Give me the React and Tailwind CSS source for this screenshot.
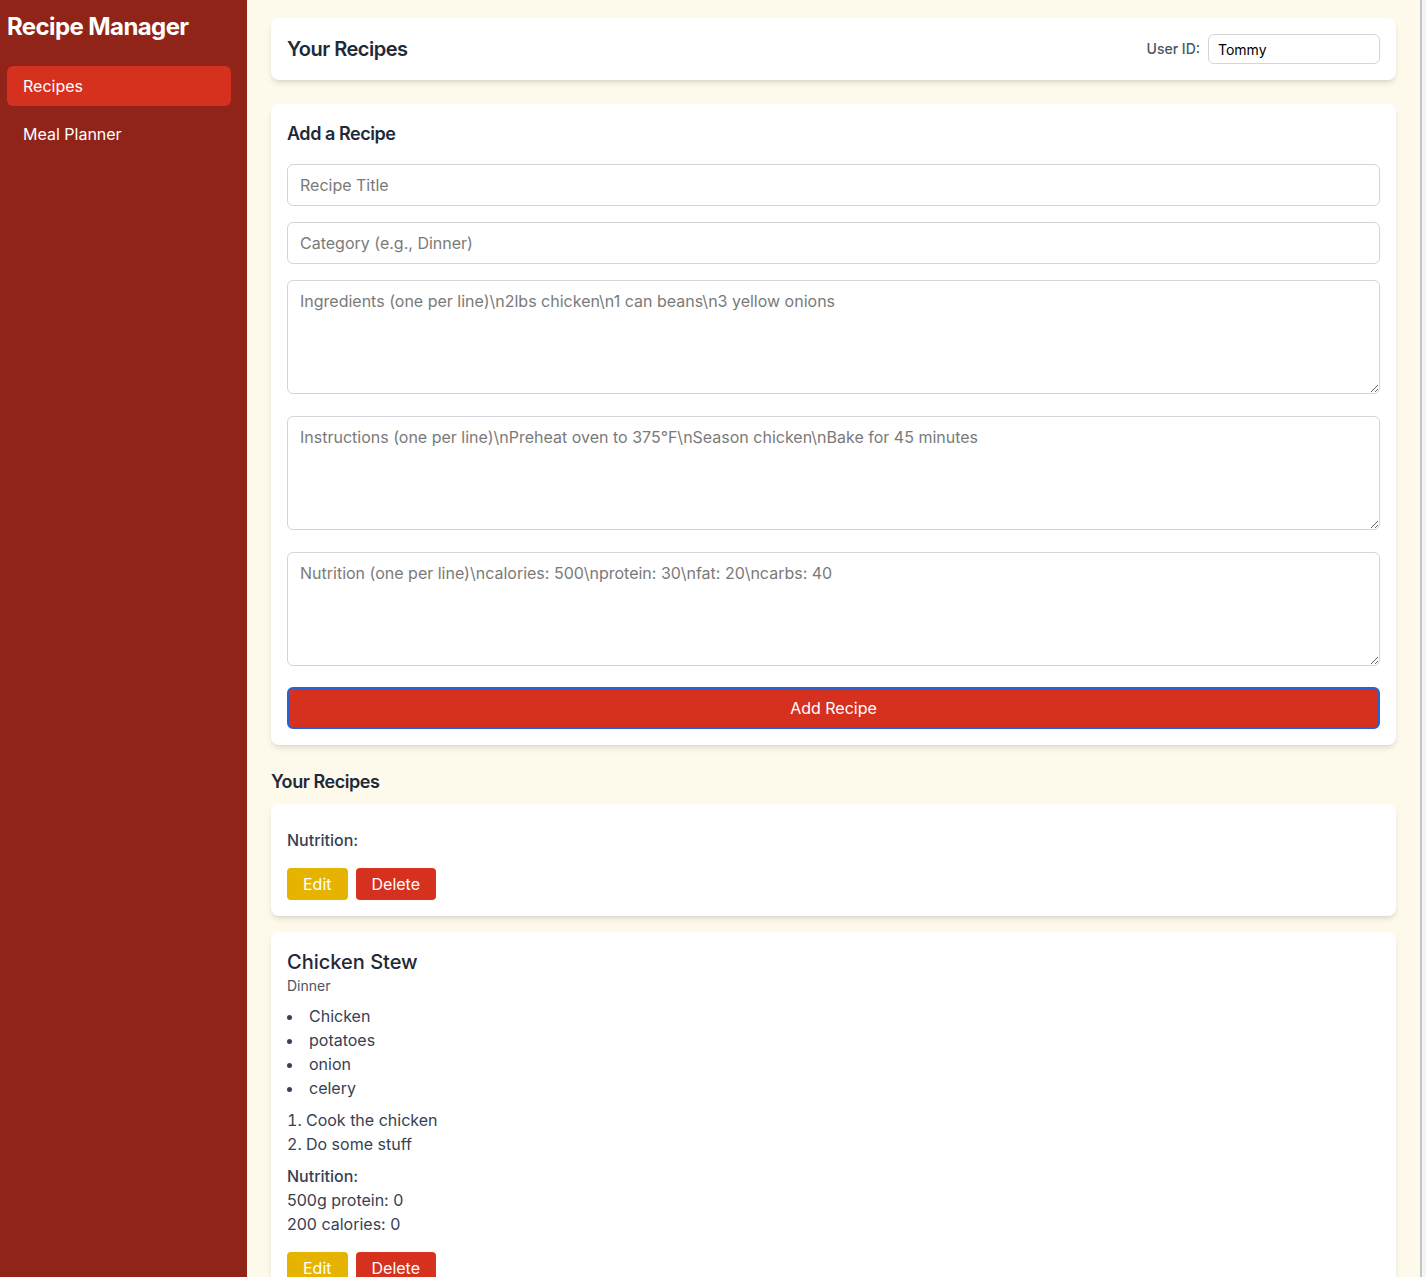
import React from 'react';

const recipes = [
  { id: 1, title: '', category: '', ingredients: [], instructions: [], nutrition: [] },
  {
    id: 2,
    title: 'Chicken Stew',
    category: 'Dinner',
    ingredients: ['Chicken', 'potatoes', 'onion', 'celery'],
    instructions: ['Cook the chicken', 'Do some stuff'],
    nutrition: ['500g protein: 0', '200 calories: 0'],
  },
];

function RecipeCard({ recipe }) {
  return (
    <div className="bg-white rounded-lg shadow-md p-4 mb-4">
      {recipe.title && (
        <>
          <h3 className="text-xl font-medium text-gray-800 leading-7">{recipe.title}</h3>
          <p className="text-sm text-gray-600 leading-5">{recipe.category}</p>
          <ul className="list-disc list-inside mt-2 text-gray-700">
            {recipe.ingredients.map((ing, i) => (
              <li key={i}>{ing}</li>
            ))}
          </ul>
          <ol className="list-decimal list-inside mt-2 text-gray-700">
            {recipe.instructions.map((step, i) => (
              <li key={i}>{step}</li>
            ))}
          </ol>
        </>
      )}
      <div className="mt-2 text-gray-700">
        <p className="font-medium">Nutrition:</p>
        {recipe.nutrition.map((n, i) => (
          <p key={i}>{n}</p>
        ))}
      </div>
      <div className="flex gap-2 mt-4">
        <button className="bg-[#e6b400] text-white px-4 h-8 rounded">Edit</button>
        <button className="bg-[#d6301f] text-white px-4 h-8 rounded">Delete</button>
      </div>
    </div>
  );
}

export default function App() {
  const inputCls =
    'block w-full border border-gray-300 rounded-md px-3 py-2 text-base text-gray-800 placeholder:text-[#7a7a7a] bg-white';

  return (
    <div className="flex min-h-screen font-['Inter',sans-serif] bg-[#fefaeb]">
      {/* Sidebar */}
      <aside className="w-[247px] shrink-0 bg-[#912419] text-white px-[7px] pt-[11px]">
        <h1 className="text-2xl font-bold leading-8 mb-[23px] tracking-tight">Recipe Manager</h1>
        <nav className="w-[224px] flex flex-col gap-2">
          <a className="block bg-[#d6301f] rounded-md px-4 py-2">Recipes</a>
          <a className="block rounded-md px-4 py-2">Meal Planner</a>
        </nav>
      </aside>

      {/* Main */}
      <main className="flex-1 px-6 pt-[18px]">
        <div className="bg-white rounded-lg shadow-md px-4 py-4 flex items-center justify-between">
          <h2 className="text-xl font-semibold text-gray-800 tracking-tight">Your Recipes</h2>
          <div className="flex items-center gap-2">
            <label className="text-sm font-medium text-gray-600">User ID:</label>
            <input
              defaultValue="Tommy"
              className="w-[172px] h-[30px] border border-gray-300 rounded-md px-[9px] text-sm text-black"
            />
          </div>
        </div>

        <div className="bg-white rounded-lg shadow-md p-4 mt-6">
          <h2 className="text-lg font-semibold text-gray-800 leading-7 mb-4 tracking-tight">Add a Recipe</h2>
          <input placeholder="Recipe Title" className={inputCls + ' mb-4'} />
          <input placeholder="Category (e.g., Dinner)" className={inputCls + ' mb-4'} />
          <textarea
            rows={4}
            placeholder="Ingredients (one per line)\n2lbs chicken\n1 can beans\n3 yellow onions"
            className={inputCls + ' mb-[22px]'}
          />
          <textarea
            rows={4}
            placeholder="Instructions (one per line)\nPreheat oven to 375°F\nSeason chicken\nBake for 45 minutes"
            className={inputCls + ' mb-[22px]'}
          />
          <textarea
            rows={4}
            placeholder="Nutrition (one per line)\ncalories: 500\nprotein: 30\nfat: 20\ncarbs: 40"
            className={inputCls + ' mb-[21px]'}
          />
          <button className="w-full h-[42px] bg-[#d6301f] text-white rounded-md border-2 border-[#2463d6]">
            Add Recipe
          </button>
        </div>

        <h2 className="text-lg font-semibold text-gray-800 leading-7 mt-[23px] mb-2 tracking-tight">Your Recipes</h2>
        {recipes.map((r) => (
          <RecipeCard key={r.id} recipe={r} />
        ))}
      </main>

      {/* scrollbar edge */}
      <div className="w-[6px] shrink-0 border-l-2 border-[#c4c4c4] bg-[#f5f5f5]" />
    </div>
  );
}
